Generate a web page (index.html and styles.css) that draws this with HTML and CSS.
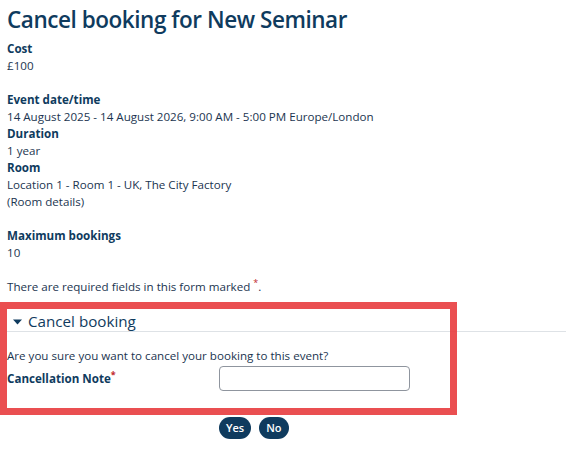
FILE: index.html
```html
<!DOCTYPE html>
<html lang="en">
<head>
<meta charset="utf-8">
<title>Cancel booking for New Seminar</title>
<link rel="stylesheet" href="styles.css">
</head>
<body>
<div class="page">
  <h1 class="title">Cancel booking for New Seminar</h1>
  <div class="info">
    <div class="label">Cost</div>
    <div class="value">£100</div>
    <div class="spacer"></div>
    <div class="label">Event date/time</div>
    <div class="value">14 August 2025 - 14 August 2026, 9:00 AM - 5:00 PM Europe/London</div>
    <div class="label">Duration</div>
    <div class="value">1 year</div>
    <div class="label">Room</div>
    <div class="value">Location 1 - Room 1 - UK, The City Factory</div>
    <div class="value">(Room details)</div>
    <div class="spacer"></div>
    <div class="label">Maximum bookings</div>
    <div class="value">10</div>
    <div class="spacer"></div>
    <div class="value">There are required fields in this form marked <span class="req">*</span>.</div>
  </div>

  <div class="section">
    <div class="legend">
      <svg class="caret" width="9" height="6" viewBox="0 0 9 6"><path d="M0 0.5 H9 L4.5 5.5 Z" fill="#0f3b5e"/></svg>
      <span>Cancel booking</span>
    </div>
    <div class="question">Are you sure you want to cancel your booking to this event?</div>
    <div class="form-row">
      <label class="field-label" for="note">Cancellation Note<span class="req">*</span></label>
      <input id="note" class="field-input" type="text">
    </div>
    <div class="highlight"></div>
  </div>

  <div class="buttons">
    <button class="btn">Yes</button>
    <button class="btn">No</button>
  </div>
</div>
</body>
</html>
```

FILE: styles.css
```css
html, body {
  margin: 0;
  padding: 0;
  background: #ffffff;
}

body {
  font-family: "Open Sans", "Noto Sans", "Liberation Sans", sans-serif;
  color: #1b2f45;
  font-size: 11.6px;
  line-height: 17px;
}

.page {
  padding: 6px 0 0 7px;
}

.title {
  margin: 0 0 6px 0;
  font-size: 22.5px;
  line-height: 28px;
  font-weight: 600;
  color: #0f3b5e;
  letter-spacing: -0.45px;
}

.info .label {
  font-weight: 700;
  color: #0f3b5e;
}

.info .value {
  color: #1b3550;
}

.spacer {
  height: 17px;
}

.req {
  color: #c0272d;
  font-size: 9px;
  vertical-align: 5px;
  line-height: 0;
}

.section {
  position: relative;
  margin-top: 16px;
  margin-left: -7px;
  padding-left: 7px;
}

.legend {
  display: flex;
  align-items: center;
  gap: 6px;
  height: 20px;
  padding-left: 6px;
  border-bottom: 1px solid #dee2e6;
  font-size: 15.2px;
  color: #0f3b5e;
}

.caret {
  display: block;
  margin-top: 1px;
}

.question {
  margin-top: 15px;
  color: #1b3550;
}

.form-row {
  display: grid;
  grid-template-columns: 212px 191px;
  align-items: start;
  margin-top: 2px;
  height: 39px;
}

.field-label {
  font-weight: 700;
  color: #0f3b5e;
  padding-top: 4px;
}

.field-input {
  box-sizing: border-box;
  width: 191px;
  height: 25px;
  margin: 0;
  border: 1px solid #8f959e;
  border-radius: 4px;
  background: #ffffff;
}

.highlight {
  position: absolute;
  left: 0;
  top: -9px;
  width: 457px;
  height: 113px;
  box-sizing: border-box;
  border: 7px solid rgba(232, 60, 62, 0.9);
  pointer-events: none;
}

.buttons {
  display: flex;
  gap: 8px;
  padding-left: 212px;
  margin-top: 12px;
}

.btn {
  height: 22px;
  padding: 0 7px;
  border: none;
  border-radius: 11px;
  background: #0f3b5e;
  color: #ffffff;
  font-family: "Open Sans", "Noto Sans", sans-serif;
  font-size: 11px;
  font-weight: 600;
  line-height: 22px;
}
```
